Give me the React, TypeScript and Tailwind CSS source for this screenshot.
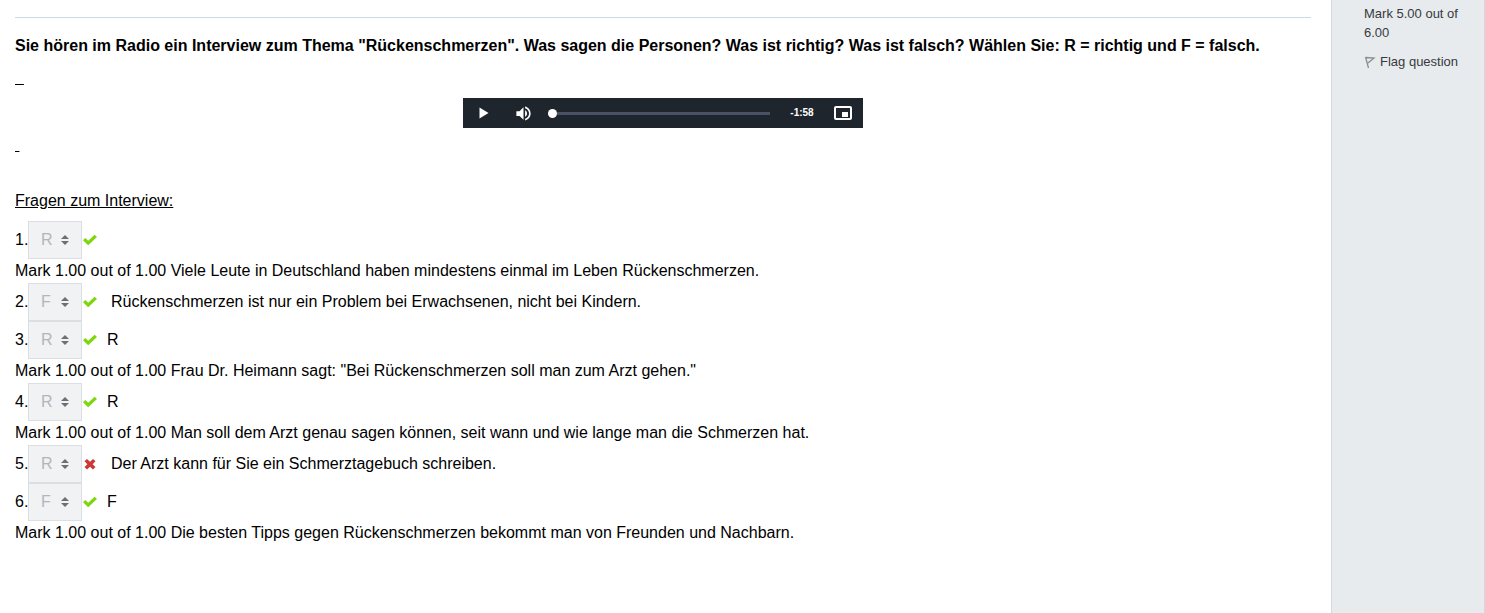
import React from "react";

type Item = { n: number; value: string; ok: boolean; inline?: string; letter?: string; below?: string };

const items: Item[] = [
  { n: 1, value: "R", ok: true, below: "Viele Leute in Deutschland haben mindestens einmal im Leben Rückenschmerzen." },
  { n: 2, value: "F", ok: true, inline: "Rückenschmerzen ist nur ein Problem bei Erwachsenen, nicht bei Kindern." },
  { n: 3, value: "R", ok: true, letter: "R", below: "Frau Dr. Heimann sagt: \"Bei Rückenschmerzen soll man zum Arzt gehen.\"" },
  { n: 4, value: "R", ok: true, letter: "R", below: "Man soll dem Arzt genau sagen können, seit wann und wie lange man die Schmerzen hat." },
  { n: 5, value: "R", ok: false, inline: "Der Arzt kann für Sie ein Schmerztagebuch schreiben." },
  { n: 6, value: "F", ok: true, letter: "F", below: "Die besten Tipps gegen Rückenschmerzen bekommt man von Freunden und Nachbarn." },
];

function Check() {
  return (
    <svg viewBox="0 0 14 14" className="size-3.5 fill-[#7ed60f]" role="img" aria-label="Correct">
      <path d="M5.2 12.3 0 7.2 2.3 4.9l2.9 2.9 6.4-6.1L14 4z" />
    </svg>
  );
}

function Cross() {
  return (
    <svg viewBox="0 0 14 14" className="size-3.5 fill-[#ca3a36]" role="img" aria-label="Incorrect">
      <path d="M4 1.9 7 4.7l3-2.8 2.5 2.4L9.6 7.2l2.9 2.9L10 12.5 7 9.7l-3 2.8-2.5-2.4 2.9-2.9-2.9-2.9z" />
    </svg>
  );
}

function Question({ item }: { item: Item }) {
  const id = `answer-${item.n}`;
  return (
    <li>
      <div className="flex h-[38px] items-center">
        <label htmlFor={id} className="w-[13px] shrink-0">{item.n}.</label>
        <span className="grid h-full w-[54px] shrink-0 items-center">
          <select
            id={id}
            disabled
            defaultValue={item.value}
            className="col-start-1 row-start-1 h-full w-full appearance-none border border-[#dbdfe4] bg-[#f0f2f4] pl-3 text-[#b1b6bd] opacity-100"
          >
            <option>R</option>
            <option>F</option>
          </select>
          <svg viewBox="0 0 8 10" className="pointer-events-none col-start-1 row-start-1 mr-[13px] h-2.5 w-2 justify-self-end fill-[#6d7073]" aria-hidden="true">
            <path d="M4 0 8 4H0zM0 6h8L4 10z" />
          </svg>
        </span>
        <span className="ml-px shrink-0">{item.ok ? <Check /> : <Cross />}</span>
        {item.letter && <span className="ml-2.5">{item.letter}</span>}
        {item.inline && <span className="ml-3.5">{item.inline}</span>}
      </div>
      {item.below && <p>Mark 1.00 out of 1.00 {item.below}</p>}
    </li>
  );
}

function Player() {
  return (
    <div className="mx-auto flex h-[30px] w-full max-w-[400px] items-center bg-[#1f252c] text-white">
      <button type="button" aria-label="Play" className="flex w-10 shrink-0 justify-center">
        <svg viewBox="0 0 10 12" className="ml-0.5 h-3 w-2.5 fill-current"><path d="M.5.5v11l9-5.5z" /></svg>
      </button>
      <button type="button" aria-label="Mute" className="flex w-10 shrink-0 justify-center">
        <svg viewBox="0 0 24 24" className="size-[19px] fill-current">
          <path d="M3 9v6h4l5 5V4L7 9H3zm13.5 3c0-1.77-1.02-3.29-2.5-4.03v8.05c1.48-.73 2.5-2.25 2.5-4.02zM14 3.23v2.06c2.89.86 5 3.54 5 6.71s-2.11 5.85-5 6.71v2.06c4.01-.91 7-4.49 7-8.77s-2.99-7.86-7-8.77z" />
        </svg>
      </button>
      <input
        type="range"
        aria-label="Progress"
        min={0}
        max={118}
        defaultValue={0}
        className="ml-[5px] h-[9px] min-w-0 flex-1 appearance-none bg-transparent [&::-webkit-slider-runnable-track]:h-[3px] [&::-webkit-slider-runnable-track]:bg-[#485263] [&::-webkit-slider-thumb]:-mt-[3px] [&::-webkit-slider-thumb]:size-[9px] [&::-webkit-slider-thumb]:appearance-none [&::-webkit-slider-thumb]:rounded-full [&::-webkit-slider-thumb]:bg-white"
      />
      <span className="w-16 shrink-0 text-center text-[10px] leading-[14px] font-bold">-1:58</span>
      <button type="button" aria-label="Picture-in-picture" className="mr-[11px] flex shrink-0">
        <svg viewBox="0 0 18 14" className="h-3.5 w-[18px]">
          <rect x="1" y="1" width="16" height="12" rx="1" fill="none" stroke="currentColor" strokeWidth="2" />
          <path d="M8 6h6v5H8z" fill="currentColor" />
        </svg>
      </button>
    </div>
  );
}

export default function App() {
  return (
    <div className="flex min-h-screen bg-white font-['Liberation_Sans',Arial,sans-serif] text-base text-black">
      <main className="min-w-0 flex-1 pt-[17px] pr-5 pl-[15px]">
        <hr className="border-t border-[#c5dde3]" />
        <h1 className="mt-4 font-bold">
          Sie hören im Radio ein Interview zum Thema "Rückenschmerzen". Was sagen die Personen? Was ist richtig? Was ist falsch? Wählen Sie: R = richtig und F = falsch.
        </h1>
        <p className="mt-2 underline">{"\u00a0\u00a0"}</p>
        <div className="mt-2"><Player /></div>
        <p className="mt-[5px] underline">{"\u00a0"}</p>
        <h2 className="mt-8 underline">Fragen zum Interview:</h2>
        <ol className="mt-2">
          {items.map((item) => <Question key={item.n} item={item} />)}
        </ol>
      </main>
      <aside className="w-[154px] shrink-0 border-x border-[#d3d8df] bg-[#e7ebee] pt-1 pr-5 pl-8 text-[13px] leading-[19px] text-[#373a3c]">
        <p>Mark 5.00 out of 6.00</p>
        <a href="#flag" className="mt-2.5 flex items-center whitespace-nowrap">
          <svg viewBox="0 0 12 14" className="mr-1 h-3.5 w-3 fill-none stroke-[#8b8e91]" aria-hidden="true">
            <path d="M1.5 2 4.5 13M2 2.5 10 3 4 8" strokeWidth="1.3" />
          </svg>
          Flag question
        </a>
      </aside>
    </div>
  );
}
